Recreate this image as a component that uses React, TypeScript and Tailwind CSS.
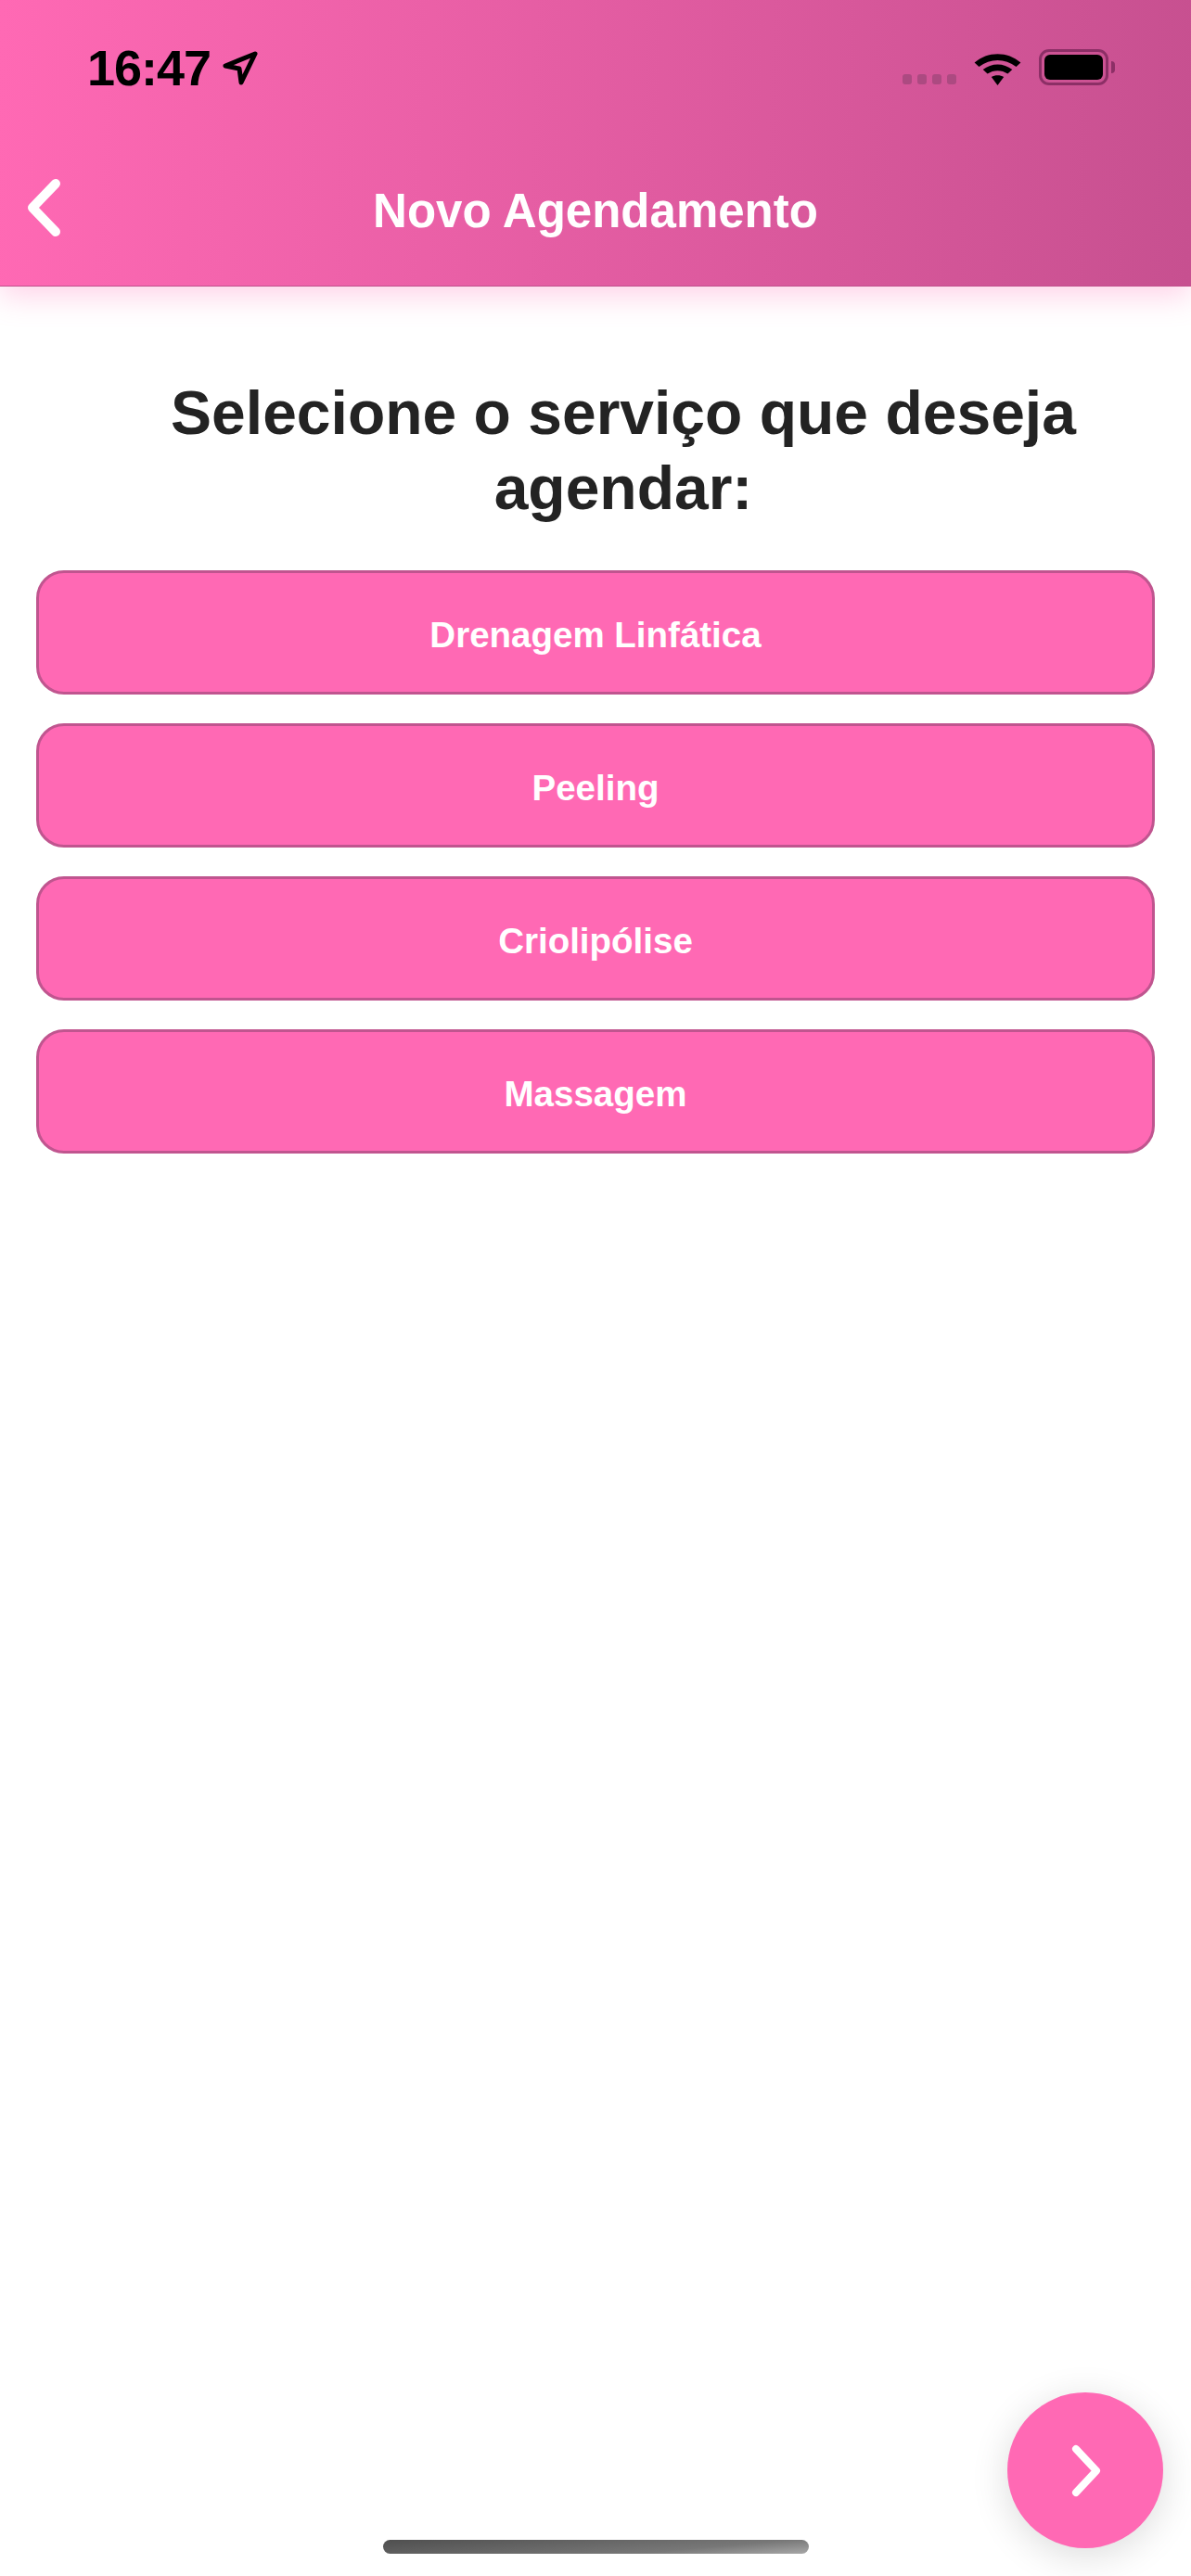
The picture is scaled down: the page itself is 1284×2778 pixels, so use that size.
const services = ['Drenagem Linfática', 'Peeling', 'Criolipólise', 'Massagem'];

export default function App() {
  return (
    <div className="relative h-[2778px] w-[1284px] overflow-hidden bg-white font-['Liberation_Sans',Arial,sans-serif]">
      {/* Header */}
      <header className="h-[309px] border-b border-[#c0508c] bg-[linear-gradient(92deg,#ff69b4,#c75090)] shadow-[0_10px_30px_rgba(255,105,180,0.3)]">
        <div className="flex h-[124px] items-start justify-between pt-[43px]">
          <div className="flex items-center gap-[9px] pl-[94px]">
            <span className="text-[54px] leading-[60px] font-bold tracking-[-1px] text-black">16:47</span>
            <svg width="44" height="44" viewBox="0 0 44 44" fill="none" className="mt-[2px]">
              <path d="M39 6 L7 19 L22 22 L24 37 Z" stroke="#000" strokeWidth="5" strokeLinejoin="round" />
            </svg>
          </div>
          <div className="flex items-end pt-[10px] pr-[82px]">
            <div className="mb-[1px] flex gap-[6px]">
              <span className="h-[11px] w-[10px] rounded-[3px] bg-[#ac4a81]" />
              <span className="h-[11px] w-[10px] rounded-[3px] bg-[#ac4a81]" />
              <span className="h-[11px] w-[10px] rounded-[3px] bg-[#ac4a81]" />
              <span className="h-[11px] w-[10px] rounded-[3px] bg-[#ac4a81]" />
            </div>
            <svg width="51" height="38" viewBox="0 0 42 38" preserveAspectRatio="none" fill="#000" className="ml-[19px]">
              <path d="M0.5 13.5 C12 1 30 1 41.5 13.5 L37.500 18 C27.500 8.500 14.500 8.500 4.500 18 Z" />
              <path d="M8 21 C15.500 13.500 26.500 13.500 34 21 L30 25.500 C24.500 21 17.500 21 12 25.500 Z" />
              <path d="M15.500 29 C18.500 26.500 23.500 26.500 26.500 29 L21 38 Z" />
            </svg>
            <div className="ml-[19px] flex items-center">
              <div className="flex h-[39px] w-[75px] items-center justify-center rounded-[11px] border-[3px] border-[#8c2f66]">
                <div className="h-[27px] w-[63px] rounded-[6px] bg-black" />
              </div>
              <div className="ml-[3px] h-[13px] w-[4px] rounded-r-[4px] bg-[#8c2f66]" />
            </div>
          </div>
        </div>
        <div className="grid h-[184px] grid-cols-[1fr_auto_1fr] items-start">
          <svg width="72" height="76" viewBox="0 0 72 76" fill="none" className="mt-[62px]">
            <path d="M60 12 L35 38 L60 64" stroke="#fff" strokeWidth="10" strokeLinecap="round" strokeLinejoin="round" />
          </svg>
          <h1 className="pt-[74px] text-[51px] leading-[60px] font-bold text-white">Novo Agendamento</h1>
          <div />
        </div>
      </header>

      {/* Service list */}
      <main className="px-[39px] pt-[96px]">
        <h2 className="pl-[60px] text-center text-[66px] leading-[81px] font-bold text-[#232323]">
          Selecione o serviço que deseja agendar:
        </h2>
        <div className="mt-[48px] flex flex-col gap-[31px]">
          {services.map((service) => (
            <button
              key={service}
              className="h-[134px] rounded-[30px] border-[3px] border-[#c0558f] bg-[#ff69b4] pt-[5px] text-[38.5px] font-bold text-white"
            >
              {service}
            </button>
          ))}
        </div>
      </main>

      {/* Next button */}
      <button className="absolute top-[2580px] left-[1086px] flex h-[168px] w-[168px] items-center justify-center rounded-full bg-[#ff69b4] shadow-[0_8px_40px_rgba(0,0,0,0.14)]">
        <svg width="60" height="72" viewBox="0 0 60 72" fill="none" className="ml-[3px]">
          <path d="M18 13 L40 36.500 L18 60" stroke="#fff" strokeWidth="8" strokeLinecap="round" strokeLinejoin="round" />
        </svg>
      </button>

      {/* Home indicator */}
      <div className="absolute top-[2739px] left-[413px] h-[15px] w-[459px] rounded-full bg-[linear-gradient(175deg,#4f4f4f,#777_70%,#a8a8a8)]" />
    </div>
  );
}
